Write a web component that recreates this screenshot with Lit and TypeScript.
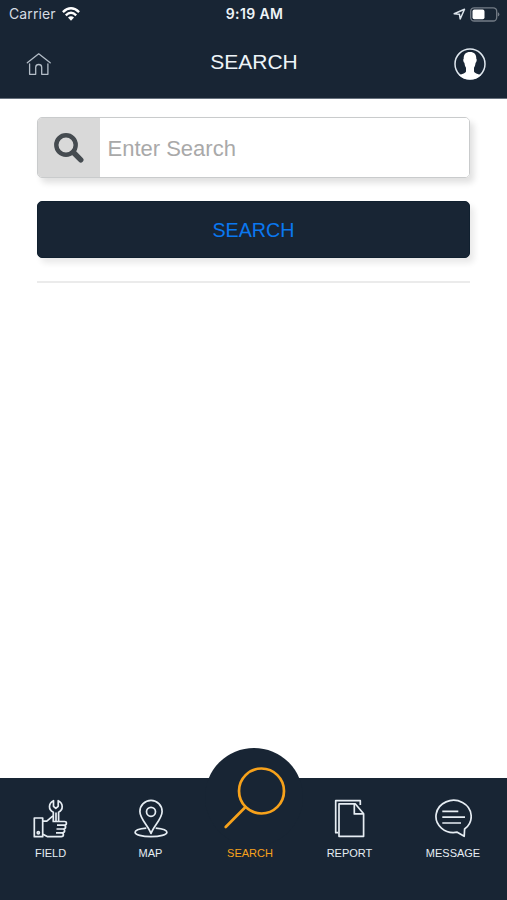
import { LitElement, html, css, svg } from "lit";
import { customElement, property } from "lit/decorators.js";

const icons = {
  field: svg`
    <rect x="2.3" y="20" width="8.4" height="18.7"></rect>
    <circle cx="6.3" cy="34.8" r="1.1"></circle>
    <path d="M10.9 23.2H14.8L20.4 18.4H21.2M10.9 36.2L15.2 38.6H29.2Q31.4 38.6 31.4 36.7T29.4 34.8H24M29.6 34.8H30.5Q32.6 34.7 32.6 32.8T30.6 31H24.5M30.6 31H31.4Q33.6 31 33.6 29.1T31.4 27.2H25M31.4 27.2H32.5Q34.4 27.1 34.4 25.3T32.5 23.5H20.5"></path>
    <path d="M21.3 23.2V14.2Q17.4 12.3 17.5 8.5Q17.6 4.5 21.5 2.7V8.3L23.8 10.4L26.2 8.3V2.7Q30.1 4.5 30.2 8.5Q30.3 12.3 26.6 14.2V23.2M24 14.5V23"></path>`,
  map: svg`
    <path d="M19 35.5C16.5 28 7.9 20.8 7.9 13.4A11.1 11.1 0 0 1 30.1 13.4C30.1 20.8 21.5 28 19 35.5Z"></path>
    <circle cx="19" cy="13.8" r="4.5"></circle>
    <path d="M14.3 30.2C7.5 30.8 3.1 32.3 3.1 34.3C3.1 36.8 10 38.7 19 38.7S34.9 36.8 34.9 34.3C34.9 32.3 30.5 30.8 23.7 30.2"></path>`,
  report: svg`
    <path d="M7.2 34.7H4.7V2.7H29.3V7"></path>
    <path d="M8 5.8H24.2L32.6 15.7V38.3H8Z"></path>
    <path d="M23.3 6V15.9H32.3"></path>`,
  message: svg`
    <path d="M30.2 38.3L30.6 31A17.6 16.1 0 1 0 23.2 34.2Z"></path>
    <path d="M8.3 13.4H24.3M8.3 19.2H31M8.3 25H27"></path>`,
};

@customElement("nav-item")
class NavItem extends LitElement {
  @property() label = "";
  @property() icon: "field" | "map" | "report" | "message" | "search" = "field";

  static styles = css`
    :host {
      display: flex;
      flex-direction: column;
      align-items: center;
      justify-content: flex-end;
      height: 112px;
      color: #e6edf3;
      font: 11px/14px "Liberation Sans", Arial, sans-serif;
    }
    svg {
      display: block;
      flex: none;
      fill: none;
      stroke: currentColor;
      stroke-linejoin: round;
    }
    .small { stroke-width: 1.7; margin-bottom: 6px; }
    .large { stroke-width: 2.7; stroke-linecap: round; margin: 0 0 16px 15px; overflow: visible; }
    .active { color: #f7a21b; }
    .label { flex: none; white-space: nowrap; }
  `;

  render() {
    if (this.icon === "search") {
      return html`
        <svg class="large active" width="66" height="66" viewBox="0 0 66 66">
          <circle cx="36.5" cy="27" r="22.5"></circle>
          <path d="M20.5 43L0.7 63"></path>
        </svg>
        <span class="label active">${this.label}</span>`;
    }
    return html`
      <svg class="small" width="38" height="42" viewBox="0 0 38 42">${icons[this.icon]}</svg>
      <span class="label">${this.label}</span>`;
  }
}

@customElement("app-root")
class AppRoot extends LitElement {
  static styles = css`
    :host {
      display: flex;
      flex-direction: column;
      height: 900px;
      background: #fff;
      font-family: "Liberation Sans", Arial, sans-serif;
      overflow: hidden;
    }
    * { box-sizing: border-box; }
    svg { display: block; }
    header {
      height: 99px;
      flex: none;
      background: #182534;
      border-bottom: 1px solid #67717d;
      color: #eef4f8;
    }
    .status {
      height: 28px;
      display: grid;
      grid-template-columns: 1fr auto 1fr;
      align-items: center;
      padding: 0 7px 0 9px;
      font: 14px/28px Inter, sans-serif;
    }
    .carrier { display: flex; align-items: center; gap: 6px; color: #d5dce3; letter-spacing: 0.1px; }
    .time { font-weight: 600; font-size: 14px; letter-spacing: 0.35px; }
    .power { display: flex; align-items: center; justify-content: flex-end; gap: 4px; }
    .bar {
      height: 70px;
      display: grid;
      grid-template-columns: 1fr auto 1fr;
      align-items: center;
      padding: 2px 21px 0 26px;
    }
    h1 { margin: 0 4px 5px 0; font-size: 21px; line-height: 24px; font-weight: 400; }
    .profile { justify-self: end; }
    main { flex: 1; padding: 18px 37px 0; }
    .field {
      display: flex;
      height: 61px;
      border: 1px solid #c9cbcc;
      border-radius: 5px;
      box-shadow: 4px 5px 6px rgba(0, 0, 0, 0.12);
      overflow: hidden;
    }
    .addon {
      width: 62px;
      flex: none;
      display: grid;
      place-items: center;
      background: #d9d9d9;
    }
    input {
      flex: 1;
      min-width: 0;
      border: 0;
      padding: 2px 8px 0 7.5px;
      background: #fff;
      font: 22px "Liberation Sans", Arial, sans-serif;
      outline: none;
    }
    input::placeholder { color: #a9a9a9; opacity: 1; }
    button {
      display: block;
      width: 100%;
      height: 57px;
      margin: 23px 0 0;
      padding: 2px 0 0;
      border: 1px solid #10202f;
      border-radius: 5px;
      background: #182534;
      color: #0a78f0;
      font: 19.7px "Liberation Sans", Arial, sans-serif;
      box-shadow: 4px 5px 6px rgba(0, 0, 0, 0.09);
    }
    .rule { height: 2px; margin-top: 23px; background: #ebebeb; }
    nav {
      position: relative;
      height: 122px;
      flex: none;
      background: #182534;
    }
    .hump {
      position: absolute;
      left: 205px;
      top: -30px;
      width: 98px;
      height: 98px;
      border-radius: 50%;
      background: #182534;
    }
    .tabs {
      position: relative;
      display: grid;
      grid-template-columns: 101px 99px 100px 99px 108px;
      margin-top: -30px;
    }
  `;

  render() {
    return html`
      <header>
        <div class="status">
          <div class="carrier">
            <span>Carrier</span>
            <svg width="18" height="14" viewBox="0 0 18 14" fill="none" stroke="#fff" stroke-width="2.4">
              <path d="M0.9 5.1Q9 -2.5 17.1 5.1M3.8 8.3Q9 3.4 14.2 8.3"></path>
              <path d="M6 10.6Q9 8 12 10.6L9 13.7Z" fill="#fff" stroke="none"></path>
            </svg>
          </div>
          <span class="time">9:19 AM</span>
          <div class="power">
            <svg width="13" height="12" viewBox="0 0 13 12" fill="none" stroke="#dce4eb" stroke-width="1.5" stroke-linejoin="round">
              <path d="M1.2 5.7L11.5 1.2L7.2 11L6.4 6.2Z"></path>
            </svg>
            <svg width="30" height="15" viewBox="0 0 30 15">
              <rect x="0.7" y="0.8" width="26" height="13.2" rx="3.5" fill="none" stroke="#737c86" stroke-width="1.3"></rect>
              <rect x="2.5" y="2.6" width="12" height="9.6" rx="1.8" fill="#fff"></rect>
              <path d="M27.8 5.2Q29.4 5.8 29.4 7.4T27.8 9.6Z" fill="#737c86"></path>
            </svg>
          </div>
        </div>
        <div class="bar">
          <svg width="26" height="24" viewBox="0 0 26 24" fill="none" stroke="#b3bdc7" stroke-width="1.3" stroke-linejoin="round" stroke-linecap="round">
            <path d="M1.3 10.8L12.7 1.8L24.2 10.8"></path>
            <path d="M3.6 11.8V22.3H9.7V15.2Q9.9 12.5 12.7 12.5T15.7 15.2V22.3H21.9V11.8"></path>
          </svg>
          <h1>SEARCH</h1>
          <svg class="profile" width="32" height="32" viewBox="0 0 32 32">
            <circle cx="16" cy="16" r="15" fill="none" stroke="#dfe7ee" stroke-width="1.5"></circle>
            <path d="M16 4C11.7 4 9.5 6.7 9.7 10.7C8.9 11 9.3 14.2 10.4 14.8C10.7 17 11.2 18.6 12 19.8V23.4C11.2 25.5 7.5 25.9 5.1 27.2Q9.4 31.4 16 31.4T26.9 27.2C24.5 25.9 20.8 25.5 20 23.4V19.8C20.8 18.6 21.3 17 21.6 14.8C22.7 14.2 23.1 11 22.3 10.7C22.5 6.7 20.3 4 16 4Z" fill="#fff"></path>
          </svg>
        </div>
      </header>
      <main>
        <div class="field">
          <span class="addon">
            <svg width="30" height="30" viewBox="0 0 30 30" fill="none" stroke="#454b50">
              <circle cx="12" cy="12" r="9.7" stroke-width="4.4"></circle>
              <path d="M19.5 19.5L26.8 26.8" stroke-width="5.4" stroke-linecap="round"></path>
            </svg>
          </span>
          <input placeholder="Enter Search" />
        </div>
        <button>SEARCH</button>
        <div class="rule"></div>
      </main>
      <nav>
        <div class="hump"></div>
        <div class="tabs">
          <nav-item icon="field" label="FIELD"></nav-item>
          <nav-item icon="map" label="MAP"></nav-item>
          <nav-item icon="search" label="SEARCH"></nav-item>
          <nav-item icon="report" label="REPORT"></nav-item>
          <nav-item icon="message" label="MESSAGE"></nav-item>
        </div>
      </nav>
    `;
  }
}
